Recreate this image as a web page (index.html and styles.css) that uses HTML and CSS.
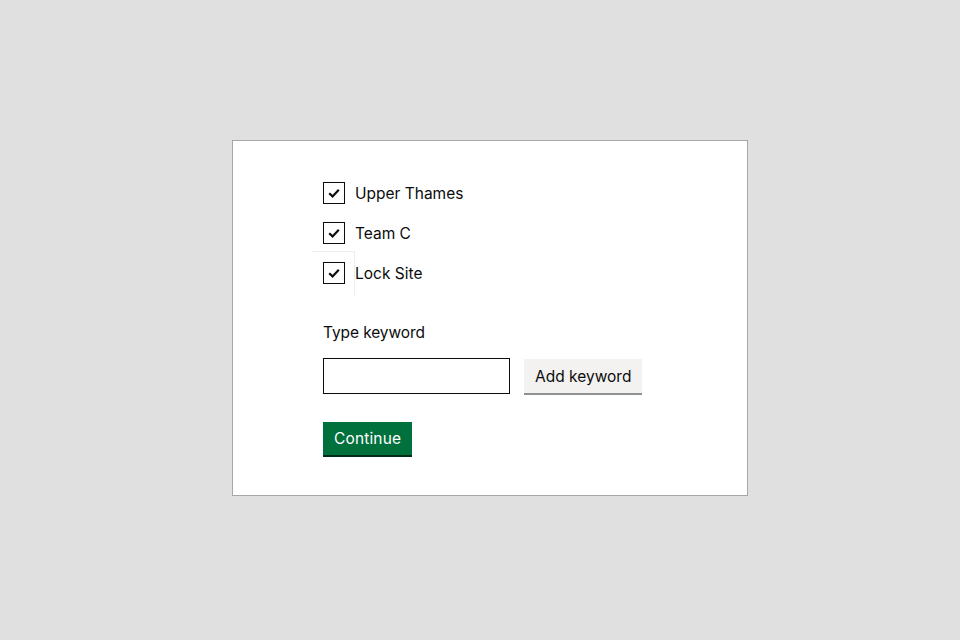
FILE: index.html
```html
<!DOCTYPE html>
<html lang="en">
<head>
<meta charset="utf-8">
<title>Keywords</title>
<link rel="stylesheet" href="styles.css">
</head>
<body>
<main class="card">
  <div class="checks">
    <label class="check">
      <span class="box"><svg viewBox="0 0 22 22" width="22" height="22"><path d="M6.2 11.2 L9.6 14.4 L15.8 7.8" fill="none" stroke="#0b0c0c" stroke-width="2.2"/></svg></span>
      <span class="check-label">Upper Thames</span>
    </label>
    <label class="check">
      <span class="box"><svg viewBox="0 0 22 22" width="22" height="22"><path d="M6.2 11.2 L9.6 14.4 L15.8 7.8" fill="none" stroke="#0b0c0c" stroke-width="2.2"/></svg></span>
      <span class="check-label">Team C</span>
    </label>
    <label class="check check-hover">
      <span class="box"><svg viewBox="0 0 22 22" width="22" height="22"><path d="M6.2 11.2 L9.6 14.4 L15.8 7.8" fill="none" stroke="#0b0c0c" stroke-width="2.2"/></svg></span>
      <span class="check-label">Lock Site</span>
    </label>
  </div>
  <div class="field">
    <label class="field-label" for="kw">Type keyword</label>
    <div class="field-row">
      <input id="kw" class="input" type="text">
      <button class="btn btn-secondary" type="button">Add keyword</button>
    </div>
  </div>
  <button class="btn btn-primary" type="button">Continue</button>
</main>
</body>
</html>
```

FILE: styles.css
```css
html, body {
  margin: 0;
  padding: 0;
}
body {
  background: #e0e0e0;
  width: 960px;
  height: 640px;
  display: flex;
  align-items: flex-start;
  justify-content: center;
  font-family: Inter, "Noto Sans", "Liberation Sans", sans-serif;
  color: #0b0c0c;
}
.card {
  margin-top: 140px;
  margin-left: 20px;
  width: 424px;
  height: 313px;
  padding: 41px 0 0 90px;
  background: #fff;
  border: 1px solid #a7a7a7;
  display: flex;
  flex-direction: column;
  align-items: flex-start;
}
.checks {
  display: flex;
  flex-direction: column;
  gap: 18px;
}
.check {
  display: flex;
  align-items: center;
  gap: 10px;
  height: 22px;
  position: relative;
}
.check-hover::before {
  content: "";
  position: absolute;
  left: -11px;
  top: -11px;
  width: 42px;
  height: 44px;
  border-top: 1px solid #eeeeee;
  border-right: 1px solid #eeeeee;
  pointer-events: none;
}
.box {
  box-sizing: border-box;
  width: 22px;
  height: 22px;
  border: 1.5px solid #0b0c0c;
  display: flex;
  align-items: center;
  justify-content: center;
  background: #fff;
}
.box svg {
  flex: none;
}
.check-label {
  font-size: 15.5px;
  line-height: 22px;
  padding-top: 2px;
}
.field {
  margin-top: 38px;
}
.field-label {
  display: block;
  font-size: 15.5px;
  line-height: 20px;
  padding-top: 1px;
  letter-spacing: -0.1px;
}
.field-row {
  margin-top: 15px;
  display: flex;
  align-items: flex-start;
  gap: 14px;
}
.input {
  box-sizing: border-box;
  width: 187px;
  height: 36px;
  border: 1.5px solid #0b0c0c;
  margin: 0;
  padding: 0 5px;
  font: inherit;
  background: #fff;
}
.btn {
  box-sizing: border-box;
  font-family: inherit;
  font-size: 15.5px;
  margin: 0;
  border: 0;
  white-space: nowrap;
  cursor: pointer;
}
.btn-secondary {
  margin-top: 1px;
  height: 34px;
  padding: 0 11px;
  background: #f3f2f1;
  color: #0b0c0c;
  box-shadow: 0 2px 0 #929191;
  line-height: 33px;
}
.btn-primary {
  margin-top: 28px;
  height: 33px;
  padding: 1px 11px 0 11px;
  background: #00703c;
  color: #fff;
  box-shadow: 0 2px 0 #002d18;
  line-height: 32px;
  letter-spacing: 0.15px;
}
```
